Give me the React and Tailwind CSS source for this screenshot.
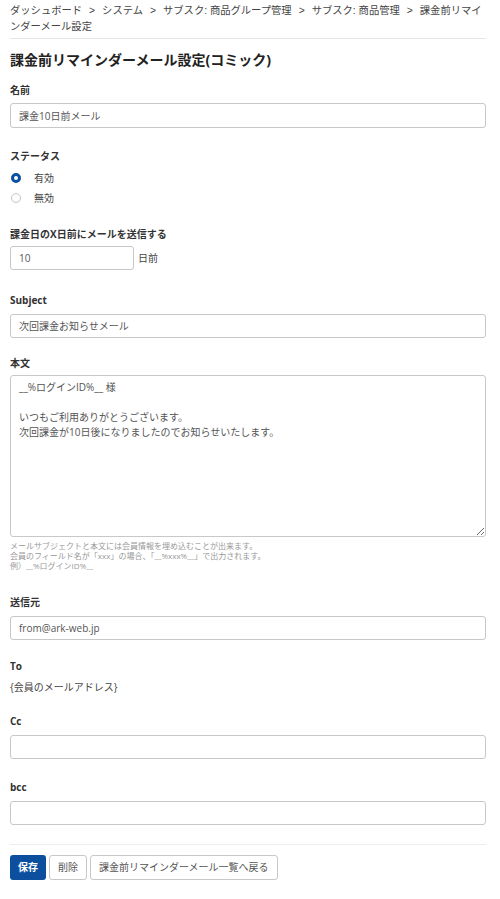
import { useState } from 'react';

const crumbs = ['ダッシュボード', 'システム', 'サブスク: 商品グループ管理', 'サブスク: 商品管理'];

const Label = ({ children }) => (
  <div className="text-[10px] leading-[16px] font-bold text-[#333] mb-[4px]">{children}</div>
);

const TextInput = ({ value, className = 'w-full h-[24px]' }) => (
  <input
    type="text"
    defaultValue={value}
    className={`${className} border border-[#c8c8c8] rounded-[3px] px-[8px] text-[10px] text-[#555] bg-white outline-none`}
  />
);

const Radio = ({ checked, label, onClick }) => (
  <label className="flex items-center h-[20px] cursor-pointer" onClick={onClick}>
    {checked ? (
      <span className="ml-[1px] w-[10px] h-[10px] rounded-full border-[3px] border-[#0b4f9e] bg-white" />
    ) : (
      <span className="ml-[1px] w-[10px] h-[10px] rounded-full border border-[#c4c4c4] bg-white" />
    )}
    <span className="ml-[13px] text-[10px] text-[#444]">{label}</span>
  </label>
);

const body = `__%ログインID%__ 様

いつもご利用ありがとうございます。
次回課金が10日後になりましたのでお知らせいたします。`;

export default function App() {
  const [status, setStatus] = useState('on');

  return (
    <div className="w-[500px] min-h-[899px] bg-white pl-[10px] pr-[14px] font-['Open_Sans','Noto_Sans_CJK_JP',sans-serif] text-[#333]">
      {/* Breadcrumb */}
      <nav className="pt-[3px] pb-[3px] border-b border-[#e6e6e6] font-['Liberation_Sans','Noto_Sans_CJK_JP',sans-serif] text-[10.3px] leading-[16px] text-[#444] whitespace-nowrap">
        {crumbs.map((c, i) => (
          <span key={i}>
            {i > 0 && <span className="mx-[7px]">&gt;</span>}
            {c}
          </span>
        ))}
        <span className="mx-[7px]">&gt;</span>
        <span>課金前リマイ</span>
        <br />
        <span>ンダーメール設定</span>
      </nav>

      <h1 className="mt-[11px] mb-[12px] text-[14px] leading-[20px] font-bold text-[#222]">
        課金前リマインダーメール設定(コミック)
      </h1>

      <div className="mb-[20px]">
        <Label>名前</Label>
        <TextInput value="課金10日前メール" className="w-full h-[25px]" />
      </div>

      <div className="mb-[18px]">
        <Label>ステータス</Label>
        <Radio checked={status === 'on'} label="有効" onClick={() => setStatus('on')} />
        <Radio checked={status === 'off'} label="無効" onClick={() => setStatus('off')} />
      </div>

      <div className="mb-[22px]">
        <Label>課金日のX日前にメールを送信する</Label>
        <div className="flex items-center">
          <TextInput value="10" className="w-[124px] h-[24px]" />
          <span className="ml-[4px] text-[10px] text-[#444]">日前</span>
        </div>
      </div>

      <div className="mb-[17px]">
        <Label>Subject</Label>
        <TextInput value="次回課金お知らせメール" />
      </div>

      <div className="mb-[23px]">
        <Label>本文</Label>
        <textarea
          defaultValue={body}
          className="block w-full h-[162px] border border-[#c8c8c8] rounded-[3px] px-[8px] py-[4px] text-[10px] leading-[15px] text-[#555] bg-white outline-none"
        />
        <div className="mt-[4px] text-[8px] leading-[10px] text-[#999]">
          <div>メールサブジェクトと本文には会員情報を埋め込むことが出来ます。</div>
          <div>会員のフィールド名が「xxx」の場合、「__%xxx%__」で出力されます。</div>
          <div>例）__%ログインID%__</div>
        </div>
      </div>

      <div className="mb-[18px]">
        <Label>送信元</Label>
        <TextInput value="from@ark-web.jp" />
      </div>

      <div className="mb-[17px]">
        <Label>To</Label>
        <div className="text-[10px] leading-[18px] text-[#444]">{'{会員のメールアドレス}'}</div>
      </div>

      <div className="mb-[20px]">
        <Label>Cc</Label>
        <TextInput value="" />
      </div>

      <div>
        <Label>bcc</Label>
        <TextInput value="" />
      </div>

      <div className="mt-[19px] pt-[10px] border-t border-[#eeeeee] flex gap-[3px]">
        <button className="h-[25px] px-[8px] rounded-[3px] bg-[#0b4f9e] text-white text-[10px] font-bold">保存</button>
        <button className="h-[25px] px-[8px] rounded-[3px] border border-[#c8c8c8] bg-white text-[#555] text-[10px]">削除</button>
        <button className="h-[25px] px-[8px] rounded-[3px] border border-[#c8c8c8] bg-white text-[#555] text-[10px]">課金前リマインダーメール一覧へ戻る</button>
      </div>
    </div>
  );
}
